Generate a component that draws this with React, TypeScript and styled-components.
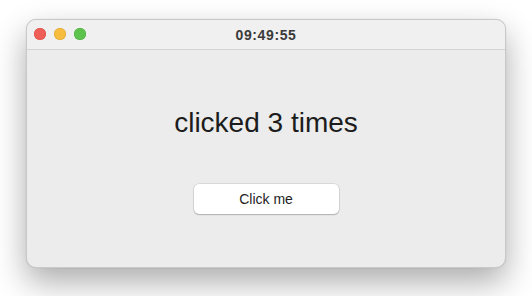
import React from 'react';
import styled, { createGlobalStyle } from 'styled-components';

const GlobalStyle = createGlobalStyle`
  html, body {
    margin: 0;
    padding: 0;
    background: #ffffff;
    font-family: "Liberation Sans", Arial, sans-serif;
  }
`;

const Stage = styled.div`
  width: 532px;
  height: 296px;
  padding: 19px 26px 0 26px;
  box-sizing: border-box;
  overflow: hidden;
`;

const Window = styled.div`
  width: 480px;
  height: 249px;
  border-radius: 10px;
  background: #ececec;
  border: 1px solid #c9c9c9;
  box-sizing: border-box;
  box-shadow: 0 14px 32px rgba(0, 0, 0, 0.33), 0 0 1px rgba(0, 0, 0, 0.2);
  display: flex;
  flex-direction: column;
  overflow: hidden;
`;

const TitleBar = styled.div`
  position: relative;
  height: 29px;
  flex: none;
  background: #f0f0f0;
  border-bottom: 1px solid #d3d3d3;
  display: flex;
  align-items: center;
  justify-content: center;
`;

const Lights = styled.div`
  position: absolute;
  left: 7px;
  top: 8px;
  display: flex;
  gap: 8px;
`;

const Light = styled.span<{ $color: string; $ring: string }>`
  width: 12px;
  height: 12px;
  border-radius: 50%;
  background: ${(p) => p.$color};
  box-shadow: inset 0 0 0 0.5px ${(p) => p.$ring};
`;

const Title = styled.div`
  font-size: 14px;
  font-weight: bold;
  color: #3a3a3a;
  letter-spacing: 0.6px;
`;

const Body = styled.div`
  flex: 1;
  display: flex;
  flex-direction: column;
  align-items: center;
  padding-top: 56px;
`;

const Count = styled.div`
  font-size: 28px;
  color: #1c1c1c;
  line-height: 34px;
`;

const Button = styled.button`
  margin-top: 44px;
  width: 145px;
  height: 30px;
  border-radius: 5px;
  border: none;
  background: #ffffff;
  box-shadow: 0 0 0 0.5px rgba(0, 0, 0, 0.15), 0 1px 1.5px rgba(0, 0, 0, 0.2);
  font-family: "Liberation Sans", Arial, sans-serif;
  font-size: 14px;
  color: #1e1e1e;
  cursor: pointer;
`;

export default function App() {
  const [count, setCount] = React.useState(3);
  return (
    <>
      <GlobalStyle />
      <Stage>
        <Window>
          <TitleBar>
            <Lights>
              <Light $color="#ee5f57" $ring="#d8473f" />
              <Light $color="#f6bd3f" $ring="#d9a02c" />
              <Light $color="#5ec34c" $ring="#47a83a" />
            </Lights>
            <Title>09:49:55</Title>
          </TitleBar>
          <Body>
            <Count>clicked {count} times</Count>
            <Button onClick={() => setCount(count + 1)}>Click me</Button>
          </Body>
        </Window>
      </Stage>
    </>
  );
}
